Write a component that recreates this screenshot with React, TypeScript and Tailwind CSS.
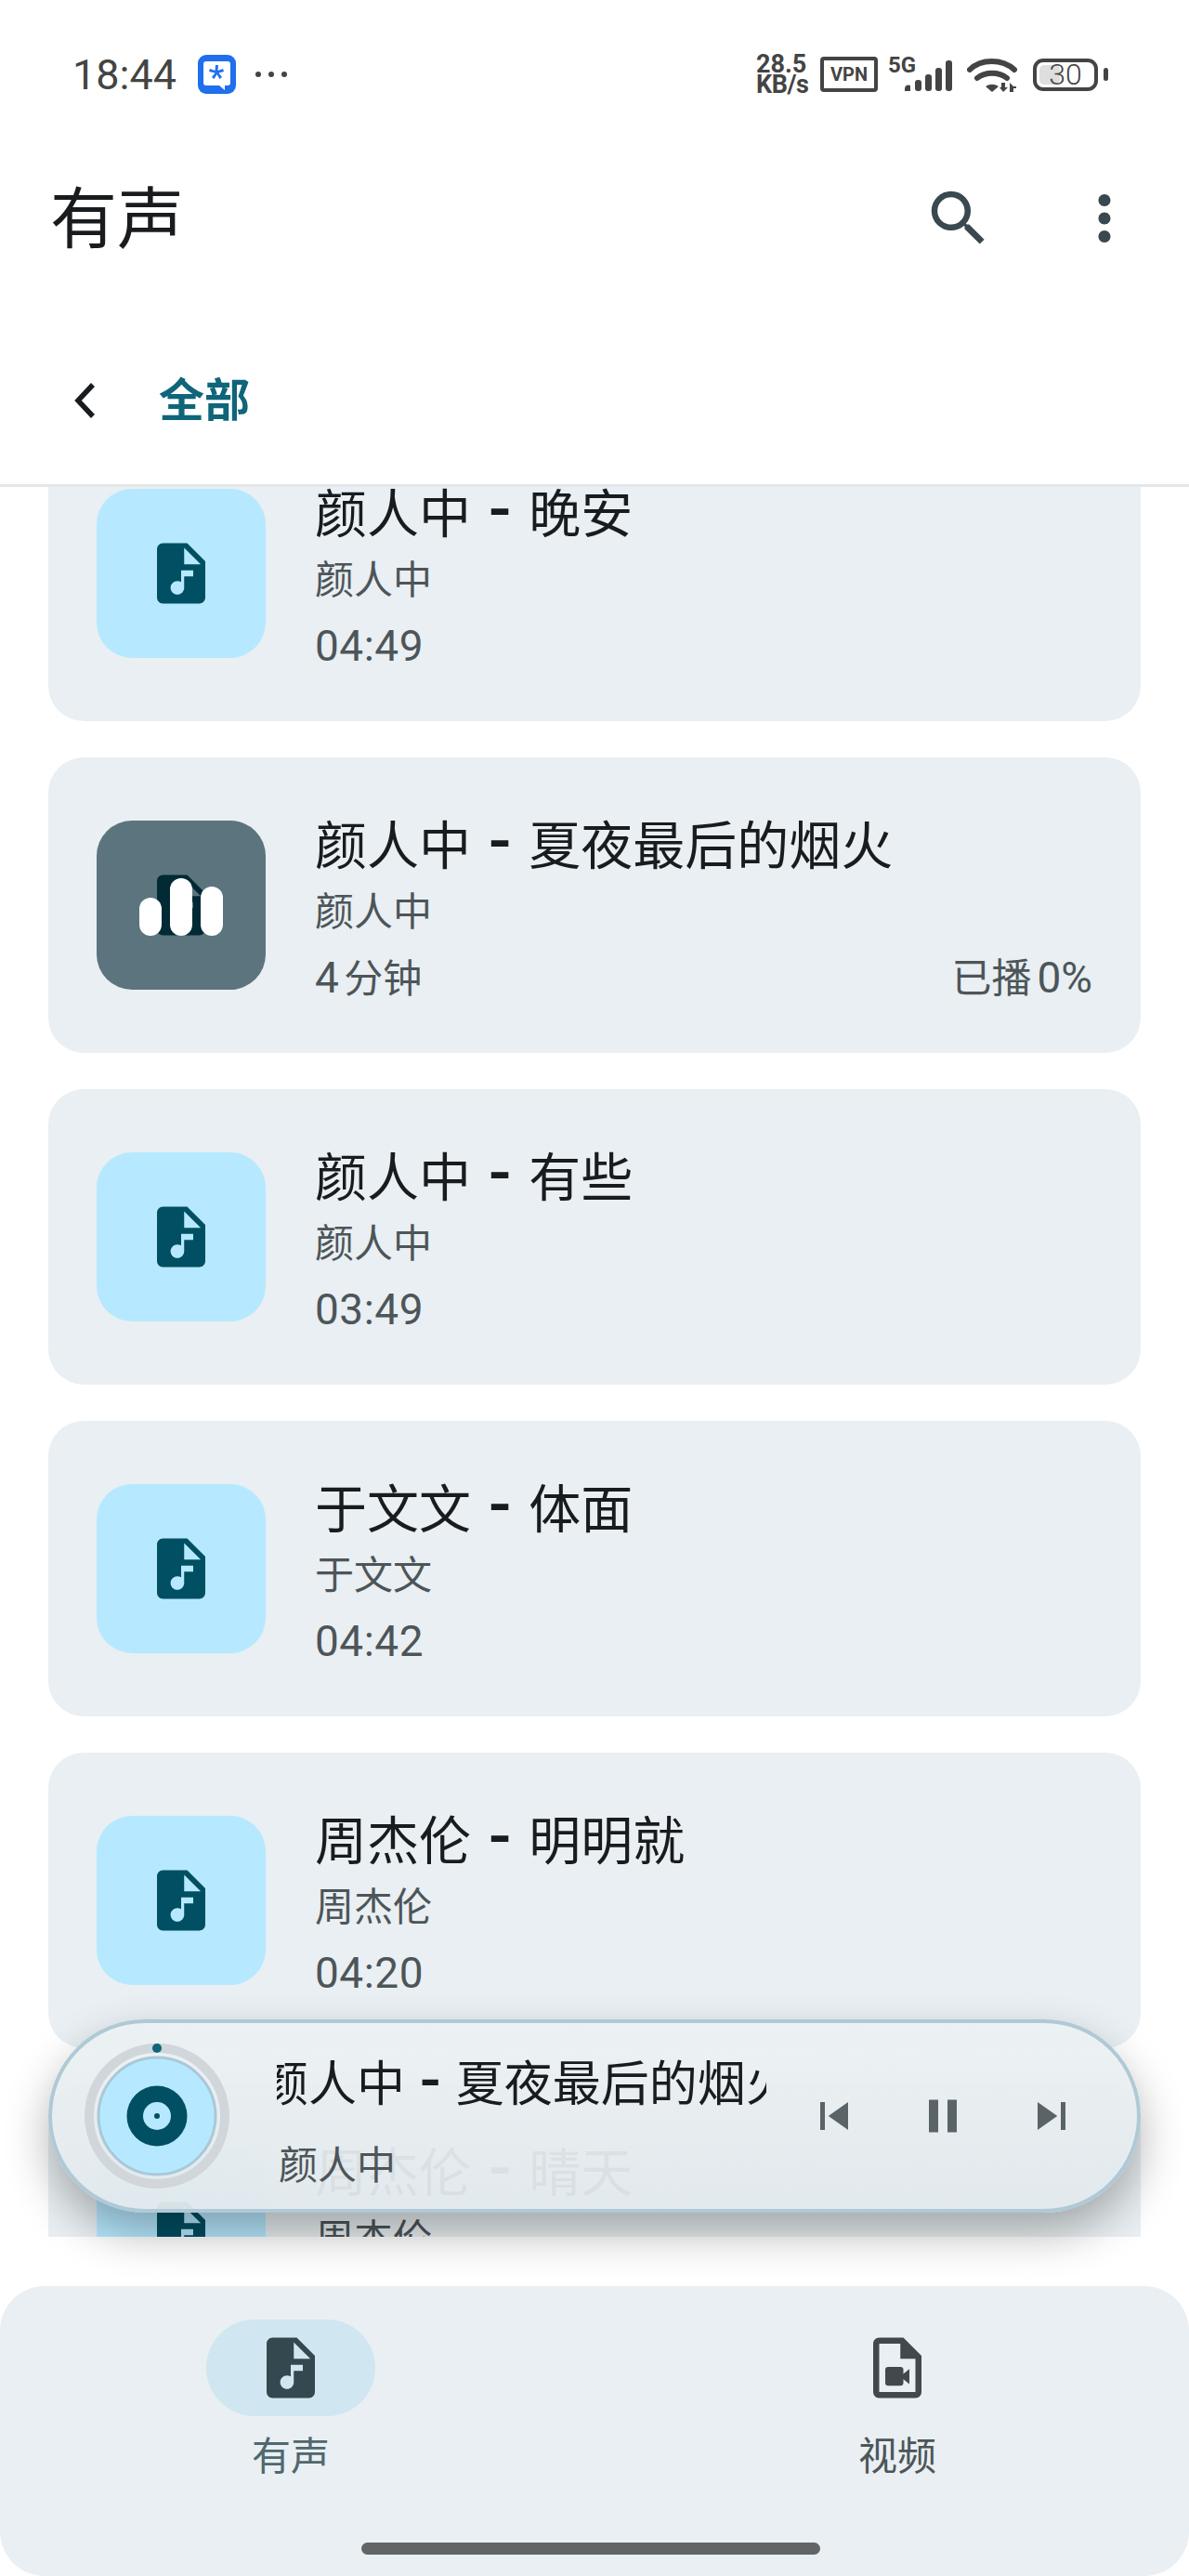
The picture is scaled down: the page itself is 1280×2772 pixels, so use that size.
import { MdAudioFile, MdMoreVert, MdPause, MdSearch, MdSkipNext, MdSkipPrevious } from 'react-icons/md';

const FONT = 'font-["Roboto","Noto_Sans_CJK_SC",sans-serif]';

const TRACKS = [
  { artist: '颜人中', song: '晚安', time: '04:49' },
  { artist: '颜人中', song: '夏夜最后的烟火', time: '4', unit: '分钟', progress: '0%', playing: true },
  { artist: '颜人中', song: '有些', time: '03:49' },
  { artist: '于文文', song: '体面', time: '04:42' },
  { artist: '周杰伦', song: '明明就', time: '04:20' },
  { artist: '周杰伦', song: '晴天', time: '03:29' },
];

function Title({ artist, song, gap }: { artist: string; song: string; gap: string }) {
  return (
    <>
      {artist}
      <span className={`text-[1.28em] font-medium ${gap}`}>-</span>
      {song}
    </>
  );
}

function StatusBar() {
  return (
    <div className="flex h-[160px] items-center justify-between pl-[78px] pr-[87px] text-[#444444]">
      <div className="flex items-center">
        <span className="text-[45px] leading-none font-normal">18:44</span>
        <svg width="41" height="42" viewBox="0 0 41 42" className="ml-[23px]">
          <rect width="41" height="42" rx="9" fill="#1f6fee" />
          <path d="M9 7h23a3 3 0 0 1 3 3v20a3 3 0 0 1-3 3h-3v5l-6-5H9a3 3 0 0 1-3-3V10a3 3 0 0 1 3-3z" fill="#fff" />
          <path d="M19 11h3l-.5 6 5.500-2 1 3-5.500 1.500 3.500 4.500-2.500 2-3-5-3 5-2.500-2 3.500-4.500L12 18l1-3 5.500 2z" fill="#1f6fee" />
        </svg>
        <div className="ml-[21px] flex gap-[8px]">
          <span className="size-[6px] rounded-full bg-[#444444]" />
          <span className="size-[6px] rounded-full bg-[#444444]" />
          <span className="size-[6px] rounded-full bg-[#444444]" />
        </div>
      </div>
      <div className="flex items-center">
        <div className="flex w-[58px] flex-col text-[27px] leading-[22px] font-bold">
          <span>28.5</span>
          <span className="tracking-[-0.5px]">KB/s</span>
        </div>
        <div className="ml-[11px] flex h-[38px] w-[62px] items-center justify-center rounded-[4px] border-[4px] border-[#444444] text-[20px] font-bold">
          VPN
        </div>
        <svg width="72" height="40" viewBox="0 0 72 40" className="ml-[9px]">
          <text x="2" y="18" fontSize="24" fontWeight="700" fill="#444444" fontFamily="Roboto">5G</text>
          <path d="M20 38v-3a4 4 0 0 1 6-3v6z" fill="#444444" />
          <rect x="31" y="26" width="7" height="12" rx="3" fill="#444444" />
          <rect x="42" y="20" width="7" height="18" rx="3" fill="#444444" />
          <rect x="53" y="13" width="7" height="25" rx="3" fill="#444444" />
          <rect x="64" y="5" width="7" height="33" rx="3" fill="#444444" />
        </svg>
        <svg width="54" height="40" viewBox="0 0 54 40" className="ml-[15px]">
          <path d="M3 15C15 3 38 3 51 15" fill="none" stroke="#444444" strokeWidth="6" strokeLinecap="round" />
          <path d="M11 24c9-7 23-7 32 0" fill="none" stroke="#444444" strokeWidth="6" strokeLinecap="round" />
          <path d="M20 33c5-3 9-3 14 0l-7 6z" fill="#444444" />
          <path d="M37 29h4v5h3l-5 5-4-5h2zM46 39v-10l4 4h3v2h-3v4z" fill="#444444" />
        </svg>
        <div className="relative ml-[17px] flex h-[35px] w-[70px] items-center justify-center rounded-[11px] border-[4px] border-[#444444] text-[32px] leading-none font-light">
          <span className="absolute top-[3px] bottom-[3px] left-[3px] w-[22px] rounded-[5px] bg-[#dedede]" />
          <span className="relative">30</span>
        </div>
        <span className="ml-[6px] h-[14px] w-[5px] rounded-full bg-[#444444]" />
      </div>
    </div>
  );
}

function Header() {
  return (
    <header className="h-[524px] border-b-[3px] border-[#e3e7ea] bg-white">
      <StatusBar />
      <div className="flex h-[150px] items-center justify-between pr-[52px] pl-[54px]">
        <h1 className="pt-[4px] text-[72px] leading-none font-normal text-[#191c1e]">有声</h1>
        <div className="flex items-center gap-[79px] text-[#3a484f]">
          <MdSearch size={78} />
          <MdMoreVert size={78} />
        </div>
      </div>
      <div className="mt-[86px] flex h-[70px] items-center pl-[78px]">
        <svg width="26" height="40" viewBox="0 0 26 40">
          <path d="M22 3 6 20l16 17" fill="none" stroke="#191c1e" strokeWidth="5.500" />
        </svg>
        <span className="ml-[67px] text-[49px] leading-none font-semibold text-[#0f6579]">全部</span>
      </div>
    </header>
  );
}

function Thumb({ playing }: { playing?: boolean }) {
  return (
    <div className={`relative flex size-[182px] shrink-0 items-center justify-center rounded-[38px] ${playing ? 'bg-[#5c747e]' : 'bg-[#b6e9ff]'}`}>
      <MdAudioFile size={78} className={playing ? 'text-[#022a35]' : 'text-[#004f63]'} />
      {playing && (
        <div className="absolute top-[62px] left-[46px] flex h-[62px] items-end gap-[9px]">
          <span className="h-[41px] w-[24px] rounded-full bg-white" />
          <span className="h-[62px] w-[24px] rounded-full bg-white" />
          <span className="h-[53px] w-[24px] rounded-full bg-white" />
        </div>
      )}
    </div>
  );
}

function TrackCard({ track }: { track: (typeof TRACKS)[number] }) {
  return (
    <div className="flex h-[318px] items-center rounded-[38px] bg-[#e9eff2] px-[52px]">
      <Thumb playing={track.playing} />
      <div className="ml-[53px] flex min-w-0 flex-1 flex-col pt-[11px]">
        <div className="text-[56px] leading-[70px] whitespace-nowrap text-[#191c1e]">
          <Title artist={track.artist} song={track.song} gap="mx-[19px]" />
        </div>
        <div className="text-[42px] leading-[71px] text-[#4d5559]">{track.artist}</div>
        <div className="flex justify-between text-[42px] leading-[70px] text-[#4d5559]">
          <span>
            <span className="text-[46px] tracking-[0.5px]">{track.time}</span>
            {track.unit && <span className="ml-[5px]">{track.unit}</span>}
          </span>
          {track.progress && (
            <span>
              <span className="text-[43px]">已播</span>
              <span className="ml-[6px] text-[46px]">{track.progress}</span>
            </span>
          )}
        </div>
      </div>
    </div>
  );
}

function Player() {
  return (
    <div className="absolute top-[1649px] left-[52px] flex h-[208px] w-[1176px] items-center rounded-[104px] border-[4px] border-[#afc9d6] bg-gradient-to-b from-[#ecf1f3]/95 to-[#e2e9ec]/95 shadow-[0_22px_48px_rgba(0,0,0,0.3)]">
      <svg width="156" height="156" viewBox="0 0 156 156" className="ml-[35px] shrink-0">
        <circle cx="78" cy="78" r="73" fill="none" stroke="#d0d6d9" strokeWidth="10" />
        <circle cx="78" cy="5" r="5" fill="#0f6579" />
        <circle cx="78" cy="78" r="63" fill="#b6e9ff" stroke="#a9c8d8" strokeWidth="3" />
        <circle cx="78" cy="78" r="32.500" fill="#004f63" />
        <circle cx="78" cy="78" r="15" fill="#b6e9ff" />
        <circle cx="78" cy="78" r="3" fill="#004f63" />
      </svg>
      <div className="ml-[51px] flex w-[527px] flex-col overflow-hidden pt-[6px]">
        <div className="-ml-[18px] text-[52px] leading-[70px] whitespace-nowrap text-[#191c1e]">
          <Title artist="颜人中" song="夏夜最后的烟火" gap="mx-[16px]" />
        </div>
        <div className="mt-[26px] ml-[2px] text-[42px] leading-[52px] text-[#4d5559]">颜人中</div>
      </div>
      <div className="ml-[43px] flex items-center gap-[57px] text-[#5a6468]">
        <MdSkipPrevious size={60} />
        <MdPause size={60} />
        <MdSkipNext size={60} />
      </div>
    </div>
  );
}

function BottomNav() {
  return (
    <nav className="relative grid h-[312px] grid-cols-2 rounded-[48px] bg-[#e9eff2]">
      <div className="flex flex-col items-center pt-[36px] pr-[14px]">
        <div className="flex h-[104px] w-[182px] items-center justify-center rounded-full bg-[#d0e6f1]">
          <MdAudioFile size={78} className="text-[#344850]" />
        </div>
        <span className="mt-[19px] text-[42px] leading-[50px] text-[#50686f]">有声</span>
      </div>
      <div className="flex flex-col items-center pt-[36px] pl-[12px]">
        <div className="flex h-[104px] w-[182px] items-center justify-center">
          <svg width="78" height="78" viewBox="0 0 24 24" fill="#41494d">
            <path d="M14 2H6c-1.100 0-2 .9-2 2v16c0 1.100.9 2 2 2h12c1.100 0 2-.9 2-2V8l-6-6zM6 20V4h7v5h5v11H6z" />
            <path d="M9 11.700h4a1 1 0 0 1 1 1V14l2-1.600v5L14 15.800v1.100a1 1 0 0 1-1 1H9a1 1 0 0 1-1-1v-4.200a1 1 0 0 1 1-1z" />
          </svg>
        </div>
        <span className="mt-[19px] text-[42px] leading-[50px] text-[#4d5559]">视频</span>
      </div>
      <span className="absolute top-[276px] left-[389px] h-[13px] w-[494px] rounded-full bg-[#626466]" />
    </nav>
  );
}

export default function App() {
  return (
    <div className={`flex h-[2772px] w-[1280px] flex-col overflow-hidden bg-white ${FONT}`}>
      <Header />
      <main className="relative flex-1">
        <div className="h-[1883px] overflow-hidden px-[52px]">
          <div className="-mt-[66px] flex flex-col gap-[39px]">
            {TRACKS.map(t => (
              <TrackCard key={t.song} track={t} />
            ))}
          </div>
        </div>
        <Player />
        <div className="mt-[53px]">
          <BottomNav />
        </div>
      </main>
    </div>
  );
}
